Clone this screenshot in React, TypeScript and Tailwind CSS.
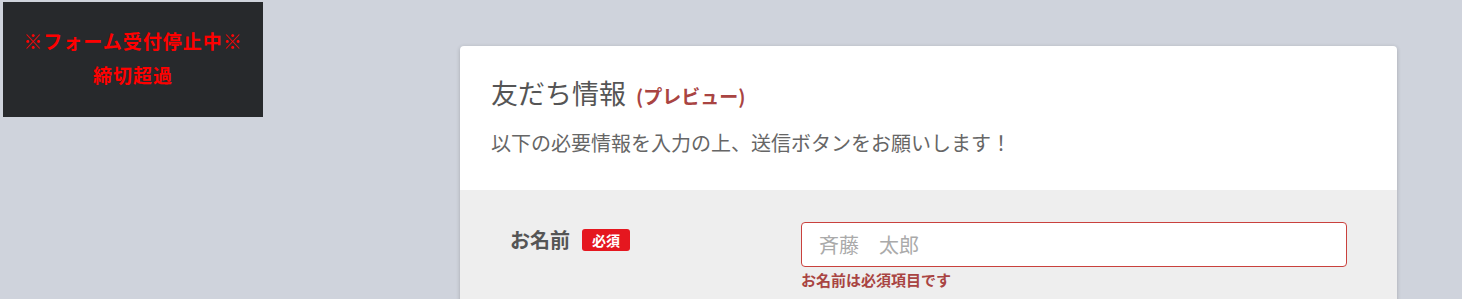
export default function App() {
  return (
    <div
      className="relative min-h-[299px] w-full overflow-hidden bg-[#cfd3dc]"
      style={{ fontFamily: '"Noto Sans CJK JP", "Noto Sans", sans-serif' }}
    >
      {/* closed notice */}
      <div className="absolute left-[3px] top-[2px] flex h-[115px] w-[260px] flex-col items-center justify-center gap-[10px] bg-[#27292c] pb-[4px] text-[19px] font-bold leading-[24px] text-[#ff0000]">
        <p className="tracking-[1px]">※フォーム受付停止中※</p>
        <p className="tracking-[1px]">締切超過</p>
      </div>

      <div className="pl-[460px] pt-[46px]">
        <div className="w-[937px] overflow-hidden rounded-[4px] bg-white shadow-[0_1px_4px_rgba(0,0,0,0.2)]">
          <div className="h-[144px] px-[31px] pt-[28px]">
            <h1 className="flex items-baseline text-[27px] leading-[38px] text-[#555555]">
              友だち情報
              <span className="ml-[10px] text-[19px] font-bold text-[#a94442]">(プレビュー)</span>
            </h1>
            <p className="mt-[14px] text-[20px] leading-[28px] text-[#666666]">
              以下の必要情報を入力の上、送信ボタンをお願いします！
            </p>
          </div>
          <div className="flex bg-[#eeeeee] px-[50px] pt-[32px] pb-[20px]">
            <div className="flex w-[291px] items-start gap-[12px] pt-[4px]">
              <span className="text-[20px] font-bold leading-[28px] text-[#555555]">お名前</span>
              <span className="mt-[3px] rounded-[3px] bg-[#e5171f] px-[10px] text-[14px] font-bold leading-[22px] text-white">
                必須
              </span>
            </div>
            <div className="flex-1">
              <input
                placeholder="斉藤　太郎"
                className="h-[45px] w-full rounded-[4px] border border-[#c9413d] bg-white px-[17px] text-[20px] text-[#555] outline-none placeholder:text-[#aaaaaa]"
              />
              <p className="mt-[3px] text-[15px] font-bold leading-[20px] text-[#a94442]">お名前は必須項目です</p>
            </div>
          </div>
        </div>
      </div>
    </div>
  );
}
